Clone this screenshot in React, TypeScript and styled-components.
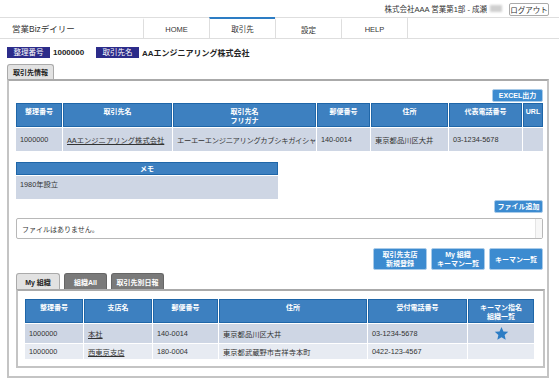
import React from "react";
import styled, { createGlobalStyle } from "styled-components";

const GlobalStyle = createGlobalStyle`
	*, *::before, *::after {
		box-sizing: border-box;
	}
	html, body {
		margin: 0;
		padding: 0;
		background: #ffffff;
	}
	body {
		font-family: "Liberation Sans", "Noto Sans CJK JP", sans-serif;
		color: #333333;
		font-size: 8px;
	}
`;

const TopBar = styled.div`
	height: 17px;
	display: flex;
	justify-content: flex-end;
	align-items: center;
	gap: 7px;
	padding-right: 10px;
`;
const UserText = styled.span`
	font-size: 7.5px;
	color: #333;
	display: flex;
	align-items: center;
	gap: 3px;
`;
const Blur = styled.span`
	display: inline-block;
	width: 12px;
	height: 7px;
	background: #cfcfcf;
	filter: blur(1.2px);
`;
const LogoutButton = styled.button`
	font-family: inherit;
	font-size: 7.5px;
	height: 13px;
	width: 40px;
	padding: 0;
	margin-top: 1px;
	background: #fff;
	border: 1px solid #aaa;
	border-radius: 2px;
	color: #333;
`;

const Nav = styled.div`
	display: flex;
	height: 22px;
	border-top: 1px solid #dedede;
	border-bottom: 1px solid #dedede;
`;
const Brand = styled.div`
	width: 143px;
	padding-left: 12px;
	display: flex;
	align-items: center;
	font-size: 8.5px;
	color: #333;
`;
const NavTab = styled.div<{ $active?: boolean }>`
	width: 66px;
	border-left: 1px solid #dedede;
	border-top: 2px solid ${(p) => (p.$active ? "#2d7dc4" : "transparent")};
	margin-top: ${(p) => (p.$active ? "-1px" : "0")};
	display: flex;
	align-items: center;
	justify-content: center;
	font-size: 7.5px;
	color: #333;
`;
const NavEnd = styled.div`
	border-left: 1px solid #dedede;
`;

const Content = styled.div`
	padding: 0 10px 0 7px;
`;

const IdRow = styled.div`
	display: flex;
	align-items: center;
	margin-top: 8px;
	height: 11px;
`;
const Badge = styled.span`
	background: #2c2c8a;
	color: #fff;
	font-size: 7.5px;
	height: 11px;
	line-height: 11px;
	width: 43px;
	text-align: center;
	margin-right: 3px;
`;
const IdValue = styled.span<{ $w?: number }>`
	font-weight: bold;
	font-size: 8px;
	color: #222;
	width: ${(p) => (p.$w ? `${p.$w}px` : "auto")};
`;

const TabRow = styled.div<{ $mt: number }>`
	display: flex;
	gap: 4px;
	margin-top: ${(p) => p.$mt}px;
`;
const Tab = styled.div<{ $active?: boolean; $w: number; $h: number }>`
	width: ${(p) => p.$w}px;
	height: ${(p) => p.$h}px;
	border: 1px solid ${(p) => (p.$active ? "#aaa" : "#666")};
	border-bottom: none;
	border-radius: 3px 3px 0 0;
	background: ${(p) => (p.$active ? "#e2e2e2" : "#7a7a7a")};
	color: ${(p) => (p.$active ? "#222" : "#fff")};
	font-weight: bold;
	font-size: 7px;
	display: flex;
	align-items: center;
	justify-content: center;
`;

const Panel = styled.div`
	border: 2px solid #c4c4c4;
	border-top-color: #aaa;
	padding: 8px 4px 8px 7px;
`;

const RightBar = styled.div<{ $mt?: number }>`
	display: flex;
	justify-content: flex-end;
	gap: 4px;
	margin-top: ${(p) => p.$mt || 0}px;
`;
const BlueButton = styled.button<{ $w: number; $h?: number }>`
	font-family: inherit;
	width: ${(p) => p.$w}px;
	height: ${(p) => p.$h || 13}px;
	padding: 0;
	background: #3c8bd0;
	border: 1px solid #a9cbe9;
	border-radius: 2px;
	color: #fff;
	font-size: 7px;
	font-weight: bold;
	line-height: 9px;
`;

const Table = styled.table<{ $w?: number }>`
	border-collapse: separate;
	border-spacing: 1px;
	width: ${(p) => (p.$w ? `${p.$w}px` : "calc(100% + 2px)")};
	margin: 0 -1px;
	table-layout: fixed;
`;
const Row = styled.tr<{ $h: number; $alt?: boolean }>`
	height: ${(p) => p.$h}px;
	& > td {
		background: ${(p) => (p.$alt ? "#e7ebf2" : "#ced6e4")};
	}
`;
const Th = styled.th<{ $w?: number }>`
	width: ${(p) => (p.$w ? `${p.$w}px` : "auto")};
	background: #3d80c0;
	border: 1px solid #1f66a8;
	color: #fff;
	font-size: 7px;
	font-weight: bold;
	vertical-align: top;
	padding: 3px 1px 0;
	line-height: 9px;
`;
const Td = styled.td<{ $center?: boolean; $tight?: boolean; $top?: boolean }>`
	color: #333;
	font-size: 7.3px;
	padding: ${(p) => (p.$top ? "3px 4px 0" : "0 4px")};
	vertical-align: ${(p) => (p.$top ? "top" : "middle")};
	text-align: ${(p) => (p.$center ? "center" : "left")};
	letter-spacing: ${(p) => (p.$tight ? "-0.35px" : "0")};
	white-space: nowrap;
	overflow: hidden;
`;
const LinkText = styled.span`
	text-decoration: underline;
	color: #333;
`;

const MemoWrap = styled.div`
	margin-top: 9px;
`;

const FileBox = styled.div`
	margin-top: 5px;
	height: 21px;
	border: 1px solid #b8b8b8;
	border-radius: 2px;
	display: flex;
	align-items: center;
	justify-content: space-between;
	font-size: 7px;
	padding-left: 5px;
`;
const ScrollStub = styled.div`
	width: 7px;
	height: 100%;
	border-left: 1px solid #e4e4e4;
	background: #f7f7f7;
`;

const SubPanel = styled.div`
	border: 2px solid #c4c4c4;
	border-top-color: #aaa;
	padding: 7px 9px 6px 7px;
	margin-right: -2px;
`;

const Star = () => (
	<svg width="15" height="15" viewBox="0 0 24 24" style={{ display: "block", margin: "0 auto" }}>
		<path
			fill="#2d7dc4"
			d="M12 1.5l3.1 7.1 7.7.7-5.8 5.1 1.7 7.6L12 18l-6.7 4 1.7-7.6-5.8-5.1 7.7-.7z"
		/>
	</svg>
);

const App = () => {
	return (
		<>
			<GlobalStyle />
			<TopBar>
				<UserText>
					株式会社AAA 営業第1部 - 成瀬 <Blur />
				</UserText>
				<LogoutButton>ログアウト</LogoutButton>
			</TopBar>
			<Nav>
				<Brand>営業Bizデイリー</Brand>
				<NavTab>HOME</NavTab>
				<NavTab $active>取引先</NavTab>
				<NavTab>設定</NavTab>
				<NavTab>HELP</NavTab>
				<NavEnd />
			</Nav>
			<Content>
				<IdRow>
					<Badge>整理番号</Badge>
					<IdValue $w={43}>1000000</IdValue>
					<Badge>取引先名</Badge>
					<IdValue>AAエンジニアリング株式会社</IdValue>
				</IdRow>
				<TabRow $mt={6}>
					<Tab $active $w={47} $h={15}>
						取引先情報
					</Tab>
				</TabRow>
				<Panel>
					<RightBar>
						<BlueButton $w={51}>EXCEL出力</BlueButton>
					</RightBar>
					<Table>
						<thead>
							<Row $h={24}>
								<Th $w={46}>整理番号</Th>
								<Th $w={109}>取引先名</Th>
								<Th $w={143}>
									取引先名
									<br />
									フリガナ
								</Th>
								<Th $w={53}>郵便番号</Th>
								<Th $w={77}>住所</Th>
								<Th $w={73}>代表電話番号</Th>
								<Th>URL</Th>
							</Row>
						</thead>
						<tbody>
							<Row $h={23}>
								<Td>1000000</Td>
								<Td>
									<LinkText>AAエンジニアリング株式会社</LinkText>
								</Td>
								<Td $tight>エーエーエンジニアリングカブシキガイシャ</Td>
								<Td>140-0014</Td>
								<Td>東京都品川区大井</Td>
								<Td>03-1234-5678</Td>
								<Td />
							</Row>
						</tbody>
					</Table>
					<MemoWrap>
						<Table $w={264}>
							<thead>
								<Row $h={13}>
									<Th style={{ paddingTop: 1 }}>メモ</Th>
								</Row>
							</thead>
							<tbody>
								<Row $h={23}>
									<Td $top>1980年設立</Td>
								</Row>
							</tbody>
						</Table>
					</MemoWrap>
					<RightBar>
						<BlueButton $w={49}>ファイル追加</BlueButton>
					</RightBar>
					<FileBox>
						ファイルはありません。
						<ScrollStub />
					</FileBox>
					<RightBar $mt={9}>
						<BlueButton $w={54} $h={22}>
							取引先支店
							<br />
							新規登録
						</BlueButton>
						<BlueButton $w={54} $h={22}>
							My 組織
							<br />
							キーマン一覧
						</BlueButton>
						<BlueButton $w={54} $h={22}>
							キーマン一覧
						</BlueButton>
					</RightBar>
					<TabRow $mt={3}>
						<Tab $active $w={44} $h={16}>
							My 組織
						</Tab>
						<Tab $w={43} $h={16}>
							組織All
						</Tab>
						<Tab $w={53} $h={16}>
							取引先別日報
						</Tab>
					</TabRow>
					<SubPanel>
						<Table>
							<thead>
								<Row $h={24}>
									<Th $w={58}>整理番号</Th>
									<Th $w={68}>支店名</Th>
									<Th $w={65}>郵便番号</Th>
									<Th $w={148}>住所</Th>
									<Th $w={99}>受付電話番号</Th>
									<Th>
										キーマン指名
										<br />
										組織一覧
									</Th>
								</Row>
							</thead>
							<tbody>
								<Row $h={19}>
									<Td>1000000</Td>
									<Td>
										<LinkText>本社</LinkText>
									</Td>
									<Td>140-0014</Td>
									<Td>東京都品川区大井</Td>
									<Td>03-1234-5678</Td>
									<Td $center>
										<Star />
									</Td>
								</Row>
								<Row $h={15} $alt>
									<Td>1000000</Td>
									<Td>
										<LinkText>西東京支店</LinkText>
									</Td>
									<Td>180-0004</Td>
									<Td>東京都武蔵野市吉祥寺本町</Td>
									<Td>0422-123-4567</Td>
									<Td />
								</Row>
							</tbody>
						</Table>
					</SubPanel>
				</Panel>
			</Content>
		</>
	);
};

export default App;
